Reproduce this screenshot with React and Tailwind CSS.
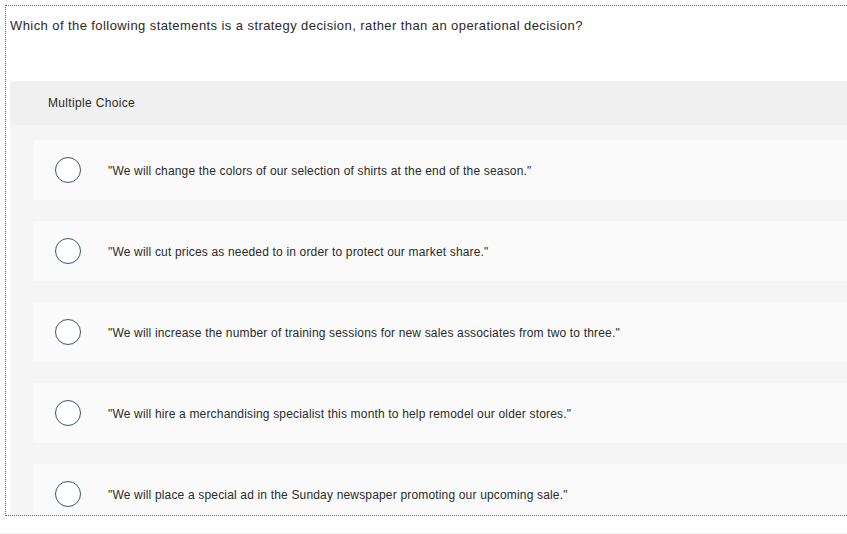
import React from "react";

const options = [
  '"We will change the colors of our selection of shirts at the end of the season."',
  '"We will cut prices as needed to in order to protect our market share."',
  '"We will increase the number of training sessions for new sales associates from two to three."',
  '"We will hire a merchandising specialist this month to help remodel our older stores."',
  '"We will place a special ad in the Sunday newspaper promoting our upcoming sale."',
];

export default function App() {
  return (
    <div
      className="w-[847px] h-[534px] bg-white overflow-hidden"
      style={{ fontFamily: '"Liberation Sans", Arial, sans-serif' }}
    >
      <div className="pt-[5px] pl-[5px]">
        <div className="h-[511px] border-t border-l border-b border-dotted border-[#5a6a80] overflow-hidden">
          <div className="pl-[4px] pt-[10px] h-[75px] text-[13px] tracking-[0.42px] text-[#2a2a2a]">
            Which of the following statements is a strategy decision, rather than an operational decision?
          </div>
          <div className="ml-[4px] bg-[#f5f5f5]">
            <div className="h-[44px] bg-[#f0f0f0] pl-[38px] flex items-center text-[12px] tracking-[0.33px] text-[#2a2a2a]">
              Multiple Choice
            </div>
            <div className="pl-[23px] pt-[15px] flex flex-col gap-[21px]">
              {options.map((o, i) => (
                <div
                  key={i}
                  className="h-[60px] bg-[#fafafa] flex items-center shrink-0"
                >
                  <div className="ml-[22px] w-[26px] h-[26px] rounded-full border-[1.5px] border-[#3b5573] bg-white shrink-0" />
                  <div className="ml-[27px] pt-[1px] text-[12px] tracking-[0.17px] text-[#2a2a2a]">{o}</div>
                </div>
              ))}
            </div>
          </div>
        </div>
      </div>
      <div className="h-px bg-[#eeeeee] mt-[17px]" />
    </div>
  );
}
